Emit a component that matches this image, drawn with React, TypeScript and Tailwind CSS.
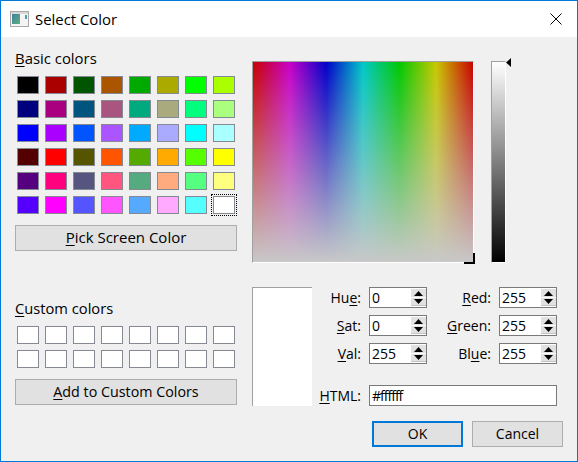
const basic = [
  "bg-[#000000]","bg-[#aa0000]","bg-[#005500]","bg-[#aa5500]","bg-[#00aa00]","bg-[#aaaa00]","bg-[#00ff00]","bg-[#aaff00]",
  "bg-[#00007f]","bg-[#aa007f]","bg-[#00557f]","bg-[#aa557f]","bg-[#00aa7f]","bg-[#aaaa7f]","bg-[#00ff7f]","bg-[#aaff7f]",
  "bg-[#0000ff]","bg-[#aa00ff]","bg-[#0055ff]","bg-[#aa55ff]","bg-[#00aaff]","bg-[#aaaaff]","bg-[#00ffff]","bg-[#aaffff]",
  "bg-[#550000]","bg-[#ff0000]","bg-[#555500]","bg-[#ff5500]","bg-[#55aa00]","bg-[#ffaa00]","bg-[#55ff00]","bg-[#ffff00]",
  "bg-[#55007f]","bg-[#ff007f]","bg-[#55557f]","bg-[#ff557f]","bg-[#55aa7f]","bg-[#ffaa7f]","bg-[#55ff7f]","bg-[#ffff7f]",
  "bg-[#5500ff]","bg-[#ff00ff]","bg-[#5555ff]","bg-[#ff55ff]","bg-[#55aaff]","bg-[#ffaaff]","bg-[#55ffff]","bg-[#ffffff]",
];

function Swatch({ color, selected }: { color: string; selected?: boolean }) {
  return (
    <div className={`h-[18px] w-[22px] border border-[#858a92] ${color} ${selected ? "outline-1 outline-offset-1 outline-dotted outline-black" : ""}`} />
  );
}

function U({ children }: { children: string }) {
  return <span className="underline decoration-1 underline-offset-2">{children}</span>;
}

function Spin({ value }: { value: string }) {
  return (
    <div className="flex h-[21px] w-[58px] items-stretch border border-[#7a7a7a] bg-white">
      <span className="flex-1 pl-[2px] leading-[19px]">{value}</span>
      <div className="flex w-[15px] flex-col py-px">
        <div className="flex h-[8px] items-center justify-center bg-[#e1e1e1]">
          <svg width="9" height="5" viewBox="0 0 9 5"><path d="M4.5 0 9 5H0z" fill="#000" /></svg>
        </div>
        <div className="mt-px flex flex-1 items-center justify-center border-b border-[#c4c4c4] bg-[#e1e1e1]">
          <svg width="9" height="5" viewBox="0 0 9 5"><path d="M0 0h9L4.5 5z" fill="#000" /></svg>
        </div>
      </div>
    </div>
  );
}

function Field({ label, value }: { label: React.ReactNode; value: string }) {
  return (
    <div className="flex h-[21px] items-center">
      <label className="w-[57px] pr-[8px] text-right">{label}</label>
      <Spin value={value} />
    </div>
  );
}

export default function App() {
  return (
    <div className="flex h-[462px] w-[578px] flex-col overflow-hidden border border-[#0078d7] bg-[#f0f0f0] text-[14px] leading-[20px] text-black [font-family:'Open_Sans','Noto_Sans',sans-serif]">
      <div className="flex h-[36px] items-center bg-white pl-[9px] pr-[15px]">
        <svg width="19" height="16" viewBox="0 0 19 16" className="mr-[6px]">
          <rect x="0.5" y="0.5" width="18" height="15" fill="#f4f4f4" stroke="#a8a8a8" />
          <rect x="1" y="1" width="17" height="2" fill="#d8d8d8" />
          <defs>
            <linearGradient id="ic" x1="0" y1="0" x2="1" y2="1">
              <stop offset="0" stopColor="#3f7f9f" />
              <stop offset="1" stopColor="#5fb07f" />
            </linearGradient>
          </defs>
          <rect x="2" y="3" width="8" height="10" fill="url(#ic)" />
          <rect x="15" y="4" width="2" height="4" fill="#4f9fa8" />
        </svg>
        <span className="text-[14.9px]">Select Color</span>
        <svg width="12" height="12" viewBox="0 0 12 12" className="ml-auto">
          <path d="M.5.5l11 11M11.5.5l-11 11" stroke="#000" strokeWidth="1" fill="none" />
        </svg>
      </div>

      <div className="flex flex-1 pl-[14px] pr-[14px]">
        <div className="flex w-[222px] flex-col">
          <div className="mt-[12px] h-[20px] text-[14.9px] leading-[18px]"><U>B</U>asic colors</div>
          <div className="mt-[7px] ml-[2px] grid w-[218px] grid-cols-8 gap-x-[6px] gap-y-[6px]">
            {basic.map((c, i) => (
              <Swatch key={i} color={c} selected={i === 47} />
            ))}
          </div>
          <button className="mt-[11px] h-[26px] w-[222px] border border-[#adadad] bg-[#e1e1e1] pb-[2px] text-[15px] leading-[22px]">
            <U>P</U>ick Screen Color
          </button>
          <div className="mt-[48px] h-[20px] text-[14.7px] leading-[18px]"><U>C</U>ustom colors</div>
          <div className="mt-[7px] ml-[2px] grid w-[218px] grid-cols-8 gap-x-[6px] gap-y-[6px]">
            {Array.from({ length: 16 }).map((_, i) => (
              <Swatch key={i} color="bg-white" />
            ))}
          </div>
          <button className="mt-[11px] h-[26px] w-[222px] border border-[#adadad] bg-[#e1e1e1] text-[14.3px] leading-[24px]">
            <U>A</U>dd to Custom Colors
          </button>
        </div>

        <div className="ml-[15px] flex flex-1 flex-col">
          <div className="mt-[24px] flex">
            <div className="relative h-[202px] w-[222px] border-t border-l border-[#a0a0a0] border-r border-b border-r-white border-b-white bg-[linear-gradient(to_right,#c80000,#c800c8_16.67%,#0000c8_33.33%,#00c8c8_50%,#00c800_66.67%,#c8c800_83.33%,#c80000)]">
              <div className="h-full w-full bg-[linear-gradient(to_bottom,rgba(200,200,200,0),#c8c8c8)]" />
              <div className="absolute right-[-2px] bottom-[-2px] h-[11px] w-[2px] bg-black" />
              <div className="absolute right-[-2px] bottom-[-2px] h-[2px] w-[11px] bg-black" />
            </div>
            <div className="relative ml-[17px] h-[202px] w-[15px] border-l border-b border-r border-[#a0a0a0] border-t border-r-white border-b-white bg-[linear-gradient(to_bottom,#ffffff,#000000)]">
              <svg width="6" height="9" viewBox="0 0 6 9" className="absolute top-[-4px] left-[14px]"><path d="M5 0v9L0 4.5z" fill="#000" /></svg>
            </div>
          </div>

          <div className="mt-[24px] flex">
            <div className="h-[119px] w-[60px] border-t border-l border-[#a0a0a0] bg-white" />
            <div className="flex flex-col">
              <div className="flex">
                <div className="flex w-[115px] flex-col gap-[7px]">
                  <Field label={<>Hu<U>e</U>:</>} value="0" />
                  <Field label={<><U>S</U>at:</>} value="0" />
                  <Field label={<><U>V</U>al:</>} value="255" />
                </div>
                <div className="ml-[15px] flex flex-col gap-[7px]">
                  <Field label={<><U>R</U>ed:</>} value="255" />
                  <Field label={<><U>G</U>reen:</>} value="255" />
                  <Field label={<>Bl<U>u</U>e:</>} value="255" />
                </div>
              </div>
              <div className="mt-[21px] flex h-[21px] items-center">
                <label className="w-[57px] pr-[8px] text-right"><U>H</U>TML:</label>
                <div className="h-[21px] w-[188px] border border-[#7a7a7a] bg-white pl-[2px] leading-[19px] tracking-[-1px]">#ffffff</div>
              </div>
            </div>
          </div>

          <div className="mt-[15px] flex gap-[9px] pl-[120px]">
            <button className="h-[26px] w-[91px] border-2 border-[#0078d7] bg-[#e1e1e1]">OK</button>
            <button className="h-[26px] w-[91px] border border-[#adadad] bg-[#e1e1e1]">Cancel</button>
          </div>
        </div>
      </div>
    </div>
  );
}
